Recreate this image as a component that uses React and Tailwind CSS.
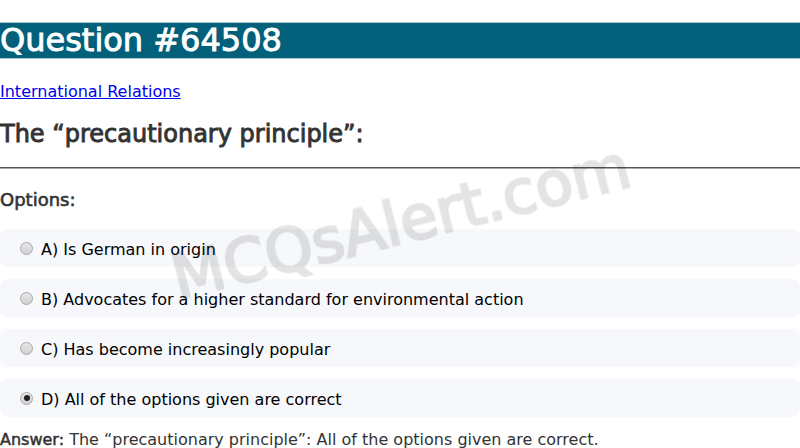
import React from 'react';

const options = [
  { key: 'A', text: 'Is German in origin' },
  { key: 'B', text: 'Advocates for a higher standard for environmental action' },
  { key: 'C', text: 'Has become increasingly popular' },
  { key: 'D', text: 'All of the options given are correct', checked: true },
];

// grey old-style radio, drawn with css
const Radio = ({ checked }) => (
  <span className="mr-[8px] flex items-center justify-center w-[13px] h-[13px] rounded-full border border-[#a8a8a8] bg-gradient-to-b from-[#e6e6e6] to-[#d2d2d2]">
    {checked && <span className="w-[6px] h-[6px] rounded-full bg-[#222]" />}
  </span>
);

const App = () => {
  return (
    <div className="relative w-[800px] h-[448px] overflow-hidden bg-white text-[#333] font-['DejaVu_Sans',sans-serif]">
      {/* Title bar */}
      <h1 className="mt-[22px] h-[37px] bg-[#02607a] border-y border-[#a9c9d2] text-white text-[32px] leading-[35px] font-normal [-webkit-text-stroke:0.9px_white]">
        Question #64508
      </h1>

      <div className="mt-[23px] text-[16px] leading-[19px]">
        <a href="#" className="text-[#0000ee] underline">International Relations</a>
      </div>

      <h2 className="mt-[18px] text-[24px] leading-[30px] font-normal [-webkit-text-stroke:0.9px_#333]">The “precautionary principle”:</h2>

      <hr className="mt-[18px] border-t border-b border-t-[#555] border-b-[#aaa]" />

      <h3 className="mt-[20px] text-[18px] leading-[22px] font-normal [-webkit-text-stroke:0.6px_#333]">Options:</h3>

      <div className="mt-[18px] flex flex-col gap-[12px]">
        {options.map((o) => (
          <div key={o.key} className="flex items-center h-[38px] rounded-[8px] bg-[#f7f8fc] pl-[20px] text-[16px] text-black">
            <Radio checked={o.checked} />
            <span className="mt-[4px]">{o.key}) {o.text}</span>
          </div>
        ))}
      </div>

      <p className="mt-[13px] text-[16px] leading-[19px]">
        <span className="[-webkit-text-stroke:0.5px_#333]">Answer:</span> The “precautionary principle”: All of the options given are correct.
      </p>

      {/* Watermark */}
      <div className="pointer-events-none select-none absolute inset-x-0 top-[192px] h-[60px] flex items-center justify-center mix-blend-multiply">
        <span className="translate-x-[1px] -rotate-[14deg] text-[61px] leading-[60px] text-[#e4e4e4] [-webkit-text-stroke:2.4px_#e4e4e4]">
          MCQsAlert.com
        </span>
      </div>
    </div>
  );
};

export default App;
